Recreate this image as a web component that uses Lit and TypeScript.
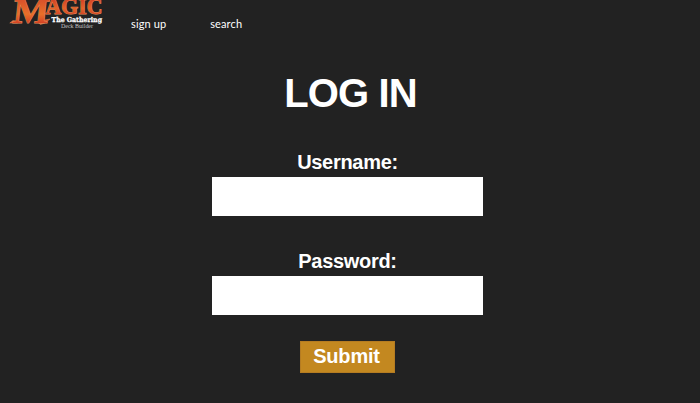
import { LitElement, html, css } from "lit";
import { customElement, property } from "lit/decorators.js";

@customElement("deck-logo")
class DeckLogo extends LitElement {
  static styles = css`
    :host { display: block; width: 110px; height: 34px; }
    svg { display: block; }
    .word { font-family: "Liberation Serif", serif; font-weight: 700; fill: url(#ember); stroke-linejoin: miter; }
    .rim { stroke: #e58f5c; stroke-width: 0.9; paint-order: stroke; }
    .sub { font-family: "DejaVu Serif", serif; font-weight: 700; font-size: 6.8px; fill: #fff; stroke: #fff; stroke-width: 0.3; }
    .small { font-family: "Liberation Serif", serif; font-size: 6px; fill: #c4c4c4; }
    .spur { fill: #d94f27; stroke: #e58f5c; stroke-width: 0.5; }
  `;
  render() {
    return html`
      <svg width="110" height="34" viewBox="0 0 110 34" role="img" aria-label="Magic The Gathering Deck Builder">
        <defs>
          <linearGradient id="ember" gradientUnits="userSpaceOnUse" x1="0" y1="-22" x2="0" y2="16">
            <stop offset="0" stop-color="#d9532a" />
            <stop offset="0.35" stop-color="#e8702a" />
            <stop offset="0.58" stop-color="#d54425" />
            <stop offset="0.8" stop-color="#e4632a" />
            <stop offset="1" stop-color="#d04024" />
          </linearGradient>
        </defs>
        <path class="spur" d="M9.8 23 L13 20.5 L21 21.5 L17 23 Z M37 21.5 L50 19 L45 23 L40.5 24.5 Z" />
        <g transform="translate(12 22.8) skewX(-6)">
          <text class="word rim" x="0" y="0" font-size="35" textLength="36" lengthAdjust="spacingAndGlyphs">M</text>
        </g>
        <text class="word rim" x="45.5" y="13.6" font-size="22.5" textLength="57" lengthAdjust="spacingAndGlyphs">AGIC</text>
        <text class="sub" x="51.5" y="22" textLength="50.5" lengthAdjust="spacingAndGlyphs">The Gathering</text>
        <text class="small" x="61" y="27.5" textLength="32" lengthAdjust="spacingAndGlyphs">Deck Builder</text>
      </svg>
    `;
  }
}

@customElement("form-field")
class FormField extends LitElement {
  @property() label = "";
  @property() type = "text";
  static styles = css`
    :host { display: block; width: 271px; }
    label { display: block; height: 28px; line-height: 26px; padding-left: 1px; text-align: center; font-size: 20px; font-weight: 700; letter-spacing: -0.3px; }
    input { display: block; box-sizing: border-box; width: 271px; height: 39px; border: 0; border-radius: 0; margin: 0; padding: 0 10px; background: #fff; font: inherit; outline: none; }
  `;
  render() {
    return html`<label for="field">${this.label}</label><input id="field" type=${this.type} />`;
  }
}

@customElement("app-root")
class AppRoot extends LitElement {
  static styles = css`
    :host { display: block; height: 403px; overflow: hidden; background: #222; color: #fff; font-family: "Liberation Sans", Arial, sans-serif; }
    header { display: flex; height: 34px; }
    nav { display: flex; gap: 44px; padding: 17px 0 0 21px; font: 11px/14px Lato, sans-serif; letter-spacing: 0.12px; }
    nav a { color: #fff; text-decoration: none; }
    main { display: flex; flex-direction: column; align-items: center; width: 694px; }
    h1 { margin: 36px 0 0 7px; font-size: 40px; line-height: 46px; letter-spacing: -0.9px; }
    .first { margin-top: 33px; }
    .second { margin-top: 32px; }
    button { width: 95px; height: 32px; margin: 26px 0 0; padding: 0 1px 2px 0; border: 1px solid #b57c22; border-radius: 0; background: #c38820; color: #fff; font: 700 20px/28px "Liberation Sans", Arial, sans-serif; letter-spacing: -0.2px; }
  `;
  render() {
    return html`
      <header>
        <deck-logo></deck-logo>
        <nav><a href="#signup">sign up</a><a href="#search">search</a></nav>
      </header>
      <main>
        <h1>LOG IN</h1>
        <form-field class="first" label="Username:"></form-field>
        <form-field class="second" label="Password:" type="password"></form-field>
        <button type="button">Submit</button>
      </main>
    `;
  }
}
